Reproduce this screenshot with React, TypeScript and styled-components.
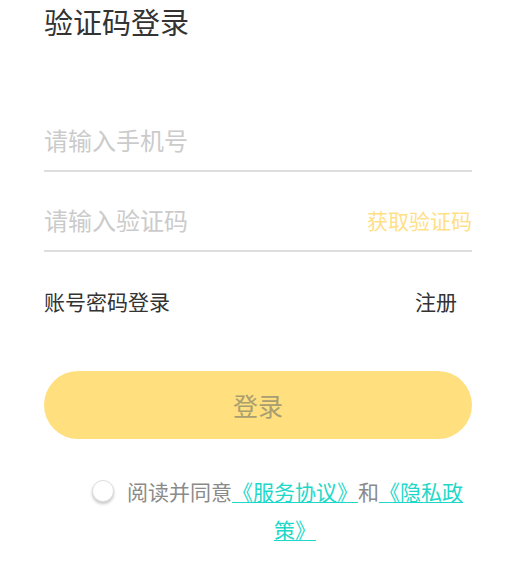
import React, { useState } from "react";
import styled, { createGlobalStyle } from "styled-components";

const Global = createGlobalStyle`
  html, body { margin: 0; padding: 0; background: #ffffff; }
  body { font-family: "Noto Sans CJK SC", "Noto Sans", sans-serif; }
  * { box-sizing: border-box; }
`;

const Page = styled.div`
  width: 516px;
  padding: 0 44px;
  display: flex;
  flex-direction: column;
`;

const Title = styled.h1`
  margin: 0;
  height: 42px;
  line-height: 42px;
  font-size: 29px;
  font-weight: 400;
  color: #333333;
`;

const Form = styled.div`
  margin-top: 68px;
  display: flex;
  flex-direction: column;
  gap: 18px;
`;

const Field = styled.div`
  height: 62px;
  display: flex;
  align-items: center;
  justify-content: space-between;
  border-bottom: 2px solid #dedede;
`;

const Input = styled.input`
  flex: 1;
  min-width: 0;
  border: none;
  outline: none;
  padding: 0;
  background: transparent;
  font-family: inherit;
  font-size: 24px;
  line-height: 60px;
  height: 60px;
  color: #333;
  &::placeholder { color: #cbcbcb; }
`;

const CodeButton = styled.span`
  font-size: 21px;
  line-height: 60px;
  color: #ffe086;
`;

const LinkRow = styled.div`
  margin-top: 34px;
  height: 30px;
  display: flex;
  align-items: center;
  justify-content: space-between;
  padding-right: 15px;
  font-size: 21px;
  color: #333333;
`;

const SubmitButton = styled.button`
  margin-top: 55px;
  height: 68px;
  border: none;
  border-radius: 34px;
  background: #ffdf7e;
  font-family: inherit;
  font-size: 25px;
  color: #a89e71;
  padding: 0;
`;

const Agreement = styled.div`
  margin-top: 33px;
  padding-left: 48px;
  display: flex;
  align-items: flex-start;
  gap: 6px;
`;

const Radio = styled.span<{ $checked: boolean }>`
  flex: none;
  margin-top: 8px;
  width: 22px;
  height: 22px;
  border-radius: 50%;
  border: 1px solid #dedede;
  background: ${(p) => (p.$checked ? "#ffdf7e" : "#ffffff")};
  box-shadow: 0 2px 3px rgba(0, 0, 0, 0.22);
`;

const AgreeText = styled.p`
  margin: 0;
  width: 350px;
  text-align: center;
  font-size: 21px;
  line-height: 38px;
  color: #8a8a8a;
`;

const Link = styled.a`
  color: #1dd8c8;
  text-decoration: underline;
  text-decoration-thickness: 1px;
  text-underline-offset: 2px;
`;

export default function App() {
  const [checked, setChecked] = useState(false);
  return (
    <>
      <Global />
      <Page>
        <Title>验证码登录</Title>
        <Form>
          <Field>
            <Input placeholder="请输入手机号" />
          </Field>
          <Field>
            <Input placeholder="请输入验证码" />
            <CodeButton>获取验证码</CodeButton>
          </Field>
        </Form>
        <LinkRow>
          <span>账号密码登录</span>
          <span>注册</span>
        </LinkRow>
        <SubmitButton>登录</SubmitButton>
        <Agreement>
          <Radio $checked={checked} onClick={() => setChecked(!checked)} />
          <AgreeText>
            阅读并同意<Link>《服务协议》</Link>和<Link>《隐私政策》</Link>
          </AgreeText>
        </Agreement>
      </Page>
    </>
  );
}
